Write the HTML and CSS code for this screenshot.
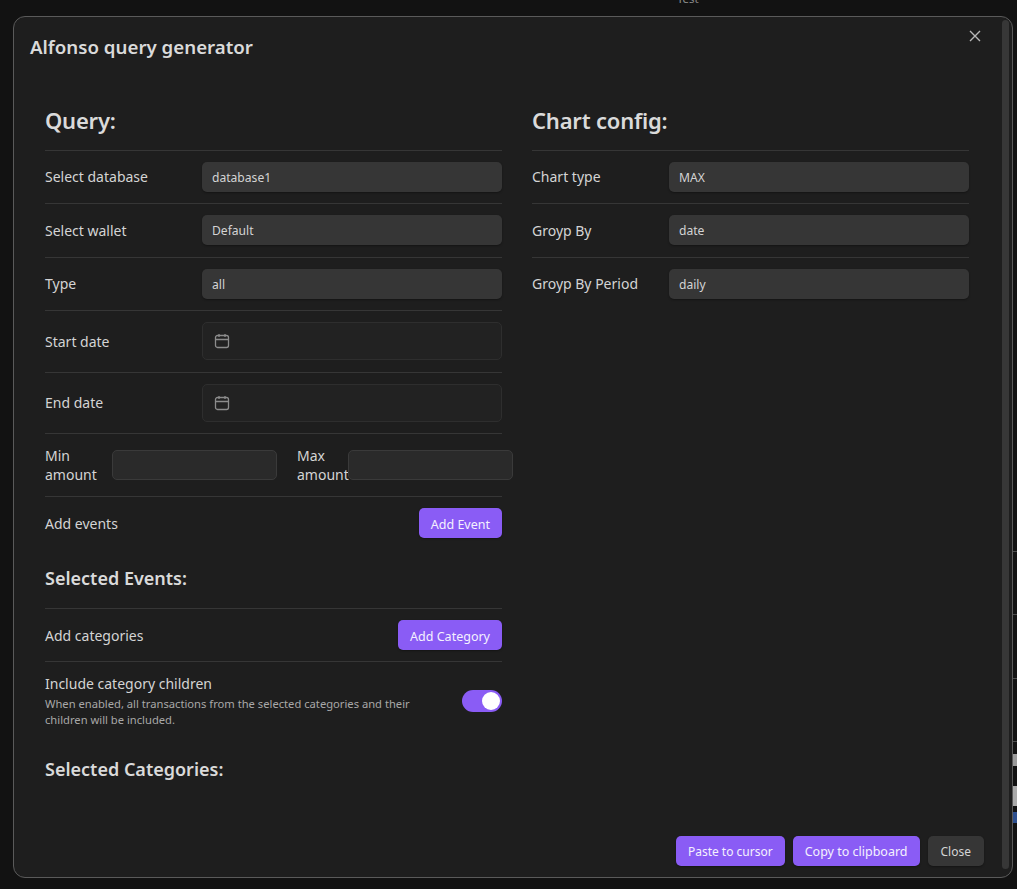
FILE: index.html
```html
<!DOCTYPE html>
<html lang="en">
<head>
<meta charset="UTF-8">
<meta name="viewport" content="width=device-width, initial-scale=1.0">
<title>Alfonso query generator</title>
<link rel="stylesheet" href="styles.css">
</head>
<body>
  <div class="backdrop-note">Test</div>

  <div class="side-bits">
    <span class="bit bit-line bit-line-1"></span>
    <span class="bit bit-line bit-line-2"></span>
    <span class="bit bit-line bit-line-3"></span>
    <span class="bit bit-line bit-line-4"></span>
    <span class="bit bit-letter"></span>
    <span class="bit bit-thumb"></span>
    <span class="bit bit-link"></span>
  </div>

  <div class="modal">
    <div class="scrollbar"></div>
    <button class="close-x" aria-label="Close">
      <svg width="14" height="14" viewBox="0 0 14 14"><path d="M2 2l10 10M12 2L2 12"/></svg>
    </button>

    <h1 class="modal-title">Alfonso query generator</h1>

    <div class="columns">
      <section class="column">
        <h2>Query:</h2>

        <div class="row row-select">
          <label class="row-name">Select database</label>
          <div class="select">database1</div>
        </div>
        <div class="row row-select">
          <label class="row-name">Select wallet</label>
          <div class="select">Default</div>
        </div>
        <div class="row row-select">
          <label class="row-name">Type</label>
          <div class="select">all</div>
        </div>
        <div class="row row-date">
          <label class="row-name">Start date</label>
          <div class="date-input">
            <svg width="16" height="16" viewBox="0 0 16 16"><rect x="1.5" y="2.5" width="13" height="12" rx="2"/><path d="M1.5 6.5h13M5 1v3M11 1v3"/></svg>
          </div>
        </div>
        <div class="row row-date">
          <label class="row-name">End date</label>
          <div class="date-input">
            <svg width="16" height="16" viewBox="0 0 16 16"><rect x="1.5" y="2.5" width="13" height="12" rx="2"/><path d="M1.5 6.5h13M5 1v3M11 1v3"/></svg>
          </div>
        </div>
        <div class="row row-amounts">
          <div class="amount amount-min">
            <label class="amount-name">Min amount</label>
            <div class="text-input"></div>
          </div>
          <div class="amount amount-max">
            <label class="amount-name">Max amount</label>
            <div class="text-input"></div>
          </div>
        </div>
        <div class="row row-button">
          <label class="row-name">Add events</label>
          <button class="btn btn-primary">Add Event</button>
        </div>

        <h3 class="sub-events">Selected Events:</h3>

        <div class="row row-button">
          <label class="row-name">Add categories</label>
          <button class="btn btn-primary">Add Category</button>
        </div>
        <div class="row row-toggle">
          <div class="toggle-text">
            <div class="row-name">Include category children</div>
            <div class="row-desc">When enabled, all transactions from the selected categories and their children will be included.</div>
          </div>
          <div class="toggle"><span class="toggle-knob"></span></div>
        </div>

        <h3 class="sub-categories">Selected Categories:</h3>
      </section>

      <section class="column column-chart">
        <h2>Chart config:</h2>

        <div class="row row-select">
          <label class="row-name">Chart type</label>
          <div class="select">MAX</div>
        </div>
        <div class="row row-select">
          <label class="row-name">Groyp By</label>
          <div class="select">date</div>
        </div>
        <div class="row row-select">
          <label class="row-name">Groyp By Period</label>
          <div class="select">daily</div>
        </div>
      </section>
    </div>

    <div class="modal-actions">
      <button class="btn btn-primary">Paste to cursor</button>
      <button class="btn btn-primary btn-copy">Copy to clipboard</button>
      <button class="btn btn-plain">Close</button>
    </div>
  </div>
</body>
</html>
```

FILE: styles.css
```css
* {
  box-sizing: border-box;
}
html, body {
  height: 100%;
}
body {
  margin: 0;
  padding: 16px 4px 11px 13px;
  background: #121212;
  color: #dadada;
  font-family: "Noto Sans", "Open Sans", sans-serif;
  overflow: hidden;
  position: relative;
}
.backdrop-note {
  position: absolute;
  top: -9px;
  left: 677px;
  font-size: 11.5px;
  color: #8a8a8a;
}
.side-bits .bit {
  position: absolute;
  right: 0;
  width: 4px;
}
.bit-line {
  height: 1px;
  background: #4c4c4c;
}
.bit-line-1 {
  top: 551px;
}
.bit-line-2 {
  top: 614px;
}
.bit-line-3 {
  top: 678px;
}
.bit-line-4 {
  top: 741px;
}
.bit-letter {
  top: 754px;
  height: 12px;
  background: #9a9a9a;
}
.bit-thumb {
  top: 786px;
  height: 20px;
  background: #aaa;
}
.bit-link {
  top: 812px;
  height: 11px;
  background: #2d4f8e;
}

.modal {
  position: relative;
  height: 100%;
  background: #1e1e1e;
  border: 1px solid #5a5a5a;
  border-radius: 12px;
  padding: 0 0 0 31px;
  overflow: hidden;
}
.scrollbar {
  position: absolute;
  top: 3px;
  right: 3px;
  bottom: 8px;
  width: 7px;
  background: #373737;
  border-radius: 4px;
}
.close-x {
  position: absolute;
  top: 11px;
  right: 28px;
  width: 18px;
  height: 16px;
  padding: 0;
  background: none;
  border: none;
  display: flex;
  align-items: center;
  justify-content: center;
}
.close-x svg {
  fill: none;
  stroke: #b8b8b8;
  stroke-width: 1.4;
}
.modal-title {
  margin: 0 0 0 -15px;
  padding-top: 16px;
  font-size: 18.7px;
  line-height: 28px;
  font-weight: 600;
  color: #dadada;
}

.columns {
  display: grid;
  grid-template-columns: 457px 437px;
  column-gap: 30px;
  margin-top: 42.6px;
}
h2 {
  margin: 0;
  font-size: 22px;
  line-height: 32px;
  font-weight: 600;
  color: #dadada;
  padding-bottom: 14px;
  letter-spacing: -0.2px;
}
h3 {
  margin: 0;
  font-size: 18px;
  line-height: 24px;
  font-weight: 600;
  color: #dadada;
}
.sub-events {
  padding: 17px 0 18px;
}
.sub-categories {
  padding: 29px 0 0;
}

.row {
  display: flex;
  align-items: center;
  border-top: 1px solid #363636;
}
.row-name, .amount-name {
  font-size: 14px;
  line-height: 19px;
  color: #d4d4d4;
}
.row-select {
  height: 53.5px;
}
.row-select .row-name {
  width: 157px;
  flex: none;
}
.column-chart .row-select .row-name {
  width: 137px;
}
.select {
  flex: 1;
  height: 30px;
  line-height: 31px;
  padding: 0 10px;
  font-size: 12.1px;
  color: #d4d4d4;
  background: #363636;
  border-radius: 5px;
  box-shadow: 0 1px 2px rgba(0, 0, 0, 0.35);
}
.row-date {
  height: 61.5px;
}
.row-date .row-name {
  width: 157px;
  flex: none;
}
.date-input {
  flex: 1;
  height: 38px;
  display: flex;
  align-items: center;
  padding-left: 11px;
  background: #222222;
  border: 1px solid #2e2e2e;
  border-radius: 5px;
}
.date-input svg {
  fill: none;
  stroke: #8c8c8c;
  stroke-width: 1.3;
}
.row-amounts {
  height: 63px;
}
.amount {
  display: flex;
  align-items: center;
}
.amount-min {
  width: 232px;
  flex: none;
}
.amount-max {
  flex: none;
  margin-left: 20px;
}
.amount-name {
  width: 67px;
  flex: none;
}
.amount-max .amount-name {
  width: 51px;
}
.text-input {
  width: 165px;
  height: 30px;
  background: #2a2a2a;
  border: 1px solid #3a3a3a;
  border-radius: 5px;
}
.row-button {
  height: 53px;
  justify-content: space-between;
}
.row-button .btn {
  padding-top: 2px;
}
.row-toggle {
  justify-content: space-between;
  padding-top: 12px;
}
.toggle-text {
  width: 380px;
}
.row-desc {
  margin-top: 3px;
  font-size: 11.2px;
  line-height: 16px;
  color: #a8a8a8;
}
.toggle {
  width: 40px;
  height: 22px;
  padding: 2px;
  display: flex;
  justify-content: flex-end;
  background: #8a5cf5;
  border-radius: 11px;
}
.toggle-knob {
  width: 18px;
  height: 18px;
  background: #fff;
  border-radius: 50%;
}

.btn {
  height: 30px;
  padding: 0 12px;
  border: none;
  border-radius: 5px;
  font-family: inherit;
  font-size: 12.5px;
  box-shadow: 0 1px 2px rgba(0, 0, 0, 0.35);
}
.btn-primary {
  background: #8a5cf5;
  color: #f4f1fe;
}
.btn-plain {
  background: #363636;
  color: #d4d4d4;
}
.modal-actions {
  position: absolute;
  right: 28px;
  bottom: 11px;
  display: flex;
  gap: 8px;
}
.modal-actions .btn {
  font-size: 12px;
}
.modal-actions .btn-copy {
  font-size: 12.5px;
}
.modal-actions .btn-plain {
  padding: 0 13px;
}
```
